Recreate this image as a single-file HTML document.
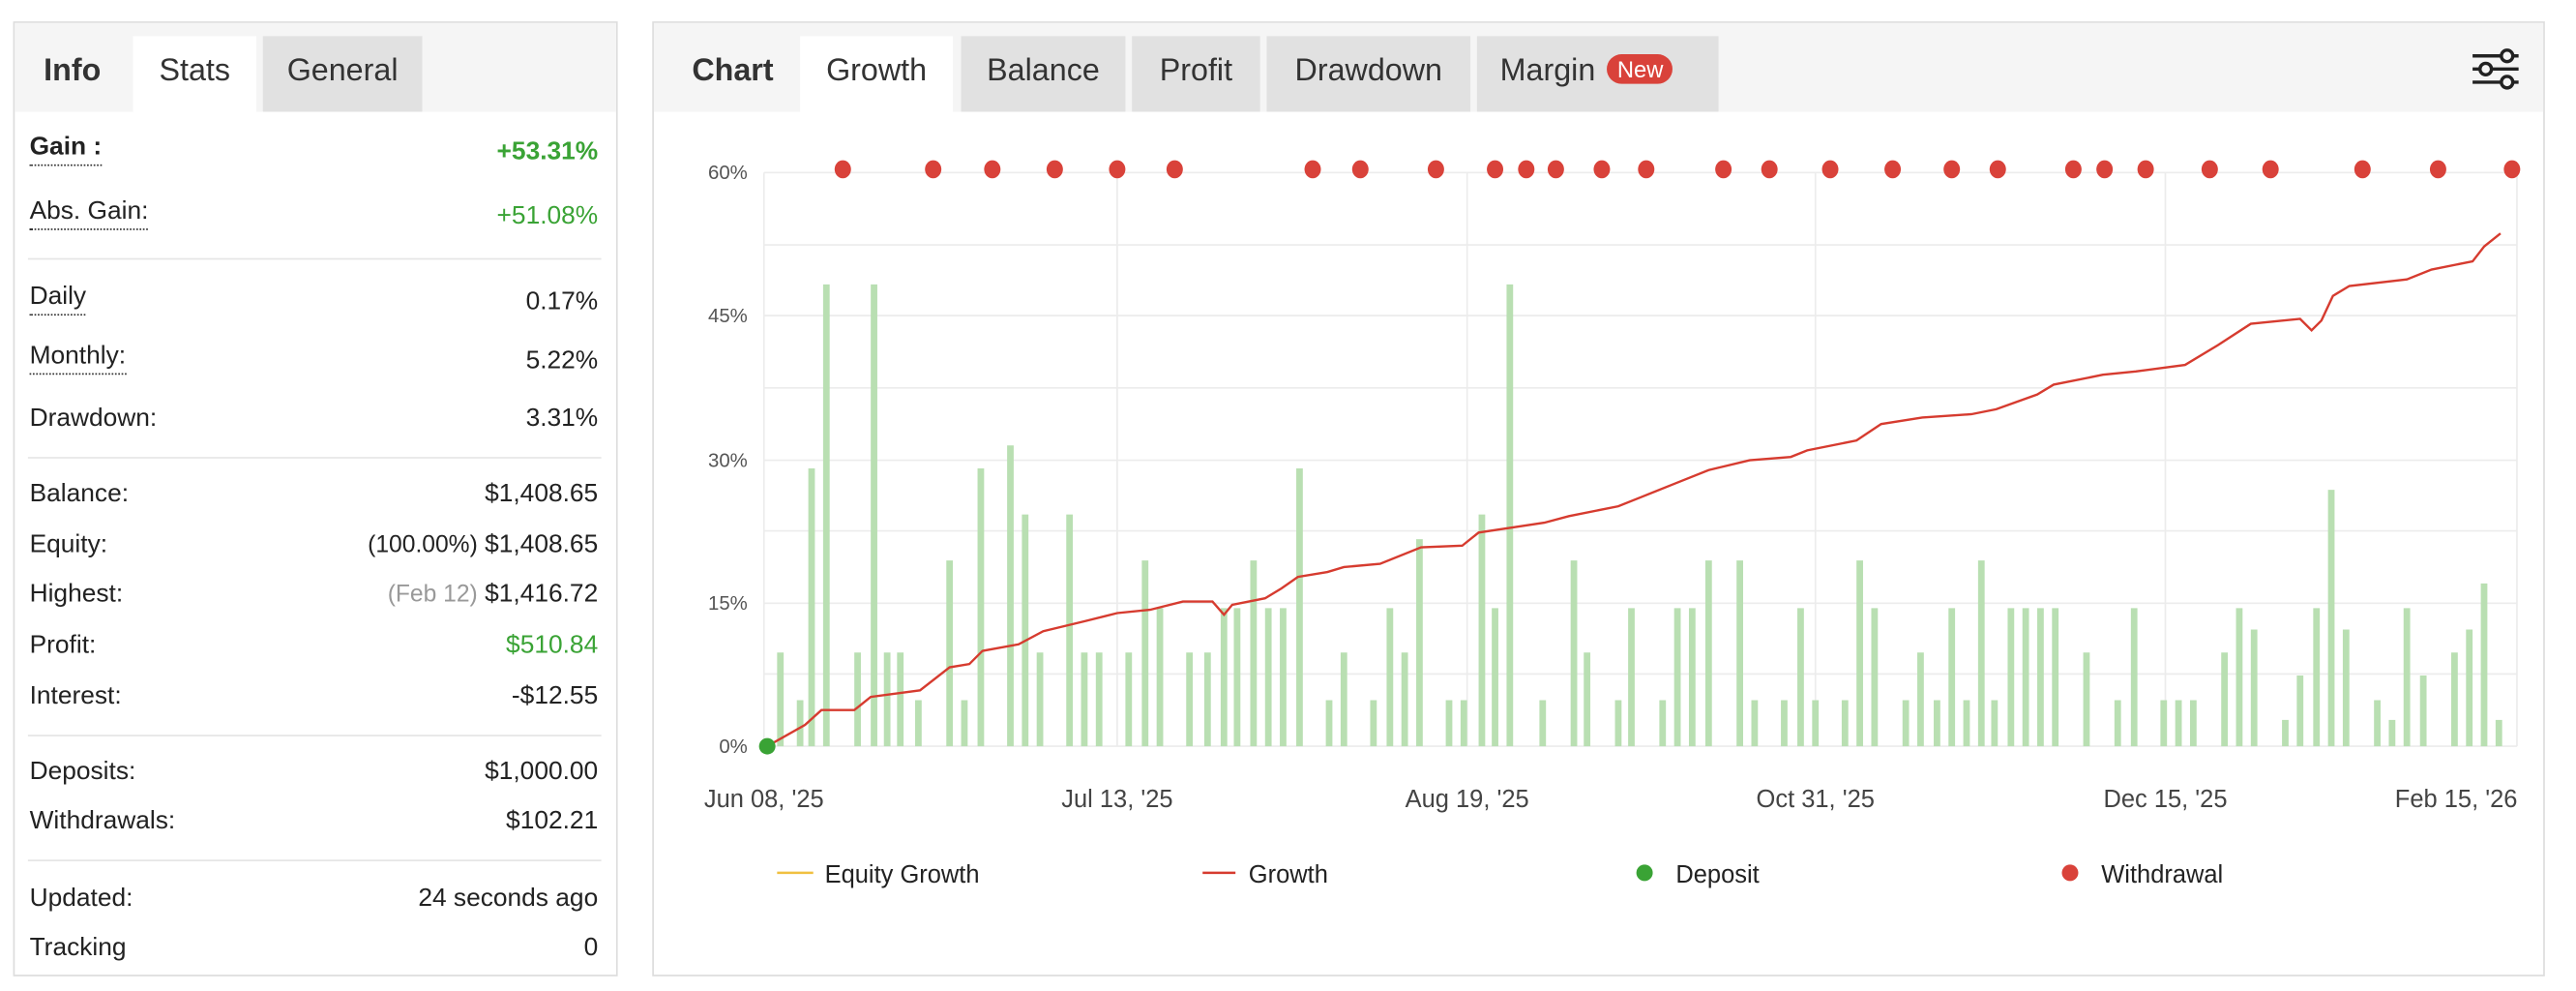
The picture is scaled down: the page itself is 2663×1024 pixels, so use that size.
<!DOCTYPE html>
<html><head><meta charset="utf-8"><style>
html,body{margin:0;padding:0;background:#fff;width:2663px;height:1024px;overflow:hidden}
#w{position:absolute;left:0;top:0;width:1568px;height:603px;transform:scale(1.6984);transform-origin:0 0;font-family:"Liberation Sans",Arial,sans-serif;color:#222}
.panel{position:absolute;border:1px solid #ddd;background:#fff;box-sizing:border-box}
.bar{position:absolute;left:0;top:0;right:0;height:54px;background:#f5f5f5}
.tab{position:absolute;top:8px;height:46px;line-height:44px;font-size:19px;color:#333;text-align:center;box-sizing:border-box}
.row{position:absolute;left:9px;right:11px;font-size:15.5px;height:20px;line-height:20px}
.row .l{position:absolute;left:0}
.row .r{position:absolute;right:0}
.u{border-bottom:1.5px dotted #333}
.hr{position:absolute;left:8px;right:9px;height:1px;background:#e6e6e6}
.g{color:#3aa335}
</style></head><body><div id="w">
<div class="panel" style="left:8px;top:13px;width:368px;height:581px">
 <div class="bar"></div>
 <div class="tab" style="left:0;width:70px;font-weight:bold">Info</div>
 <div class="tab" style="left:72px;width:75px;background:#fff">Stats</div>
 <div class="tab" style="left:151px;width:97px;background:#e1e1e1">General</div>
 <div class="row" style="top:66px"><span class="l u" style="font-weight:bold">Gain :</span><span class="r g" style="font-weight:bold;top:3px">+53.31%</span></div>
 <div class="row" style="top:105px"><span class="l u">Abs. Gain:</span><span class="r g" style="top:3px">+51.08%</span></div>
 <div class="hr" style="top:143px"></div>
 <div class="row" style="top:157px"><span class="l u">Daily</span><span class="r" style="top:3px">0.17%</span></div>
 <div class="row" style="top:193px"><span class="l u">Monthly:</span><span class="r" style="top:3px">5.22%</span></div>
 <div class="row" style="top:231px"><span class="l">Drawdown:</span><span class="r">3.31%</span></div>
 <div class="hr" style="top:264px"></div>
 <div class="row" style="top:277px"><span class="l">Balance:</span><span class="r">$1,408.65</span></div>
 <div class="row" style="top:308px"><span class="l">Equity:</span><span class="r"><span style="font-size:14.5px">(100.00%)</span> $1,408.65</span></div>
 <div class="row" style="top:338px"><span class="l">Highest:</span><span class="r"><span style="font-size:14.5px;color:#999">(Feb 12)</span> $1,416.72</span></div>
 <div class="row" style="top:369px"><span class="l">Profit:</span><span class="r g">$510.84</span></div>
 <div class="row" style="top:400px"><span class="l">Interest:</span><span class="r">-$12.55</span></div>
 <div class="hr" style="top:433px"></div>
 <div class="row" style="top:446px"><span class="l">Deposits:</span><span class="r">$1,000.00</span></div>
 <div class="row" style="top:476px"><span class="l">Withdrawals:</span><span class="r">$102.21</span></div>
 <div class="hr" style="top:509px"></div>
 <div class="row" style="top:523px"><span class="l">Updated:</span><span class="r">24 seconds ago</span></div>
 <div class="row" style="top:553px"><span class="l">Tracking</span><span class="r">0</span></div>
</div>

<div class="panel" style="left:397px;top:13px;width:1152px;height:581px">
 <div class="bar"></div>
 <div class="tab" style="left:6px;width:84px;font-weight:bold">Chart</div>
 <div class="tab" style="left:89px;width:93px;background:#fff">Growth</div>
 <div class="tab" style="left:187px;width:100px;background:#e1e1e1">Balance</div>
 <div class="tab" style="left:291px;width:78px;background:#e1e1e1">Profit</div>
 <div class="tab" style="left:373px;width:124px;background:#e1e1e1">Drawdown</div>
 <div class="tab" style="left:501px;width:147px;background:#e1e1e1;text-align:left;padding-left:14px">Margin <span style="display:inline-block;background:#d9423a;color:#fff;font-size:14px;line-height:18px;height:18px;padding:0 6px;border-radius:9px;vertical-align:2px;margin-left:2px">New</span></div>
 <svg style="position:absolute;left:1106px;top:13px" width="30" height="30" viewBox="0 0 30 30" fill="none" stroke="#222" stroke-width="2"><line x1="1" y1="7" x2="29" y2="7"/><line x1="1" y1="15" x2="29" y2="15"/><line x1="1" y1="23" x2="29" y2="23"/><circle cx="22" cy="7" r="3.5" fill="#f5f5f5"/><circle cx="9" cy="15" r="3.5" fill="#f5f5f5"/><circle cx="22" cy="23" r="3.5" fill="#f5f5f5"/></svg>
</div>

<svg style="position:absolute;left:0;top:0" width="1568" height="603" font-family="Liberation Sans,Arial,sans-serif">
 <g stroke="#ececec" stroke-width="1">
  <line x1="465" y1="105" x2="1532" y2="105"/><line x1="465" y1="149" x2="1532" y2="149"/><line x1="465" y1="192" x2="1532" y2="192"/><line x1="465" y1="236" x2="1532" y2="236"/><line x1="465" y1="280" x2="1532" y2="280"/><line x1="465" y1="323" x2="1532" y2="323"/><line x1="465" y1="367" x2="1532" y2="367"/><line x1="465" y1="410" x2="1532" y2="410"/><line x1="465" y1="454" x2="1532" y2="454"/>
  <line x1="465" y1="105" x2="465" y2="454"/><line x1="680" y1="105" x2="680" y2="454"/><line x1="893" y1="105" x2="893" y2="454"/><line x1="1105" y1="105" x2="1105" y2="454"/><line x1="1318" y1="105" x2="1318" y2="454"/><line x1="1532" y1="105" x2="1532" y2="454"/>
 </g>
 <g font-size="12" fill="#555" text-anchor="end"><text x="455" y="109">60%</text><text x="455" y="196">45%</text><text x="455" y="284">30%</text><text x="455" y="371">15%</text><text x="455" y="458">0%</text></g>
 <g stroke="#b9dfb2" stroke-width="4" id="bars"></g>
 <polyline fill="none" stroke="#d63b2f" stroke-width="1.4" points="467,454 490,441 500,432 520,432 530,424 560,420 578,406 590,404 598,396 620,392 635,384 660,378 680,373 700,371 720,366 738,366 745,374 750,368 770,364 780,358 790,351 808,348 818,345 840,343 865,333 890,332 900,324 920,321 940,318 955,314 985,308 1000,302 1020,294 1040,286 1065,280 1090,278 1100,274 1130,268 1145,258 1170,254 1200,252 1215,249 1240,240 1250,234 1280,228 1300,226 1330,222 1350,210 1370,197 1400,194 1407,201 1413,195 1420,180 1430,174 1465,170 1480,164 1505,159 1512,150 1522,142"/>
 <circle cx="467" cy="454" r="5" fill="#3aa335"/>
 <g fill="#d9423a" id="dots"></g>
 <g font-size="15" fill="#444" text-anchor="middle"><text x="465" y="491">Jun 08, '25</text><text x="680" y="491">Jul 13, '25</text><text x="893" y="491">Aug 19, '25</text><text x="1105" y="491">Oct 31, '25</text><text x="1318" y="491">Dec 15, '25</text><text x="1495" y="491">Feb 15, '26</text></g>
 <line x1="473" y1="531" x2="495" y2="531" stroke="#f0c040" stroke-width="1.5"/><text x="502" y="537" font-size="15" fill="#222">Equity Growth</text>
 <line x1="732" y1="531" x2="752" y2="531" stroke="#d63b2f" stroke-width="1.5"/><text x="760" y="537" font-size="15" fill="#222">Growth</text>
 <circle cx="1001" cy="531" r="5" fill="#3aa335"/><text x="1020" y="537" font-size="15" fill="#222">Deposit</text>
 <circle cx="1260" cy="531" r="5" fill="#d9423a"/><text x="1279" y="537" font-size="15" fill="#222">Withdrawal</text>
</svg>
<script>
var b=[[475,397],[487,426],[494,285],[503,173],[522,397],[532,173],[540,397],[548,397],[559,426],[578,341],[587,426],[597,285],[615,271],[624,313],[633,397],[651,313],[660,397],[669,397],[687,397],[697,341],[706,370],[724,397],[735,397],[745,370],[753,370],[763,341],[772,370],[781,370],[791,285],[809,426],[818,397],[836,426],[846,370],[855,397],[864,328],[882,426],[891,426],[902,313],[910,370],[919,173],[939,426],[958,341],[966,397],[985,426],[993,370],[1012,426],[1021,370],[1030,370],[1040,341],[1059,341],[1068,426],[1086,426],[1096,370],[1105,426],[1123,426],[1132,341],[1141,370],[1160,426],[1169,397],[1179,426],[1188,370],[1197,426],[1206,341],[1214,426],[1224,370],[1233,370],[1242,370],[1251,370],[1270,397],[1289,426],[1299,370],[1317,426],[1326,426],[1335,426],[1354,397],[1363,370],[1372,383],[1391,438],[1400,411],[1410,370],[1419,298],[1428,383],[1447,426],[1456,438],[1465,370],[1475,411],[1494,397],[1503,383],[1512,355],[1521,438]];
var s='';b.forEach(function(p){s+='<line x1="'+p[0]+'" y1="454" x2="'+p[0]+'" y2="'+p[1]+'"/>';});
document.getElementById('bars').innerHTML=s;
var d=[513,568,604,642,680,715,799,828,874,910,929,947,975,1002,1049,1077,1114,1152,1188,1216,1262,1281,1306,1345,1382,1438,1484,1529];
s='';d.forEach(function(x){s+='<ellipse cx="'+x+'" cy="103" rx="5" ry="5.5"/>';});
document.getElementById('dots').innerHTML=s;
</script>
</div></body></html>
